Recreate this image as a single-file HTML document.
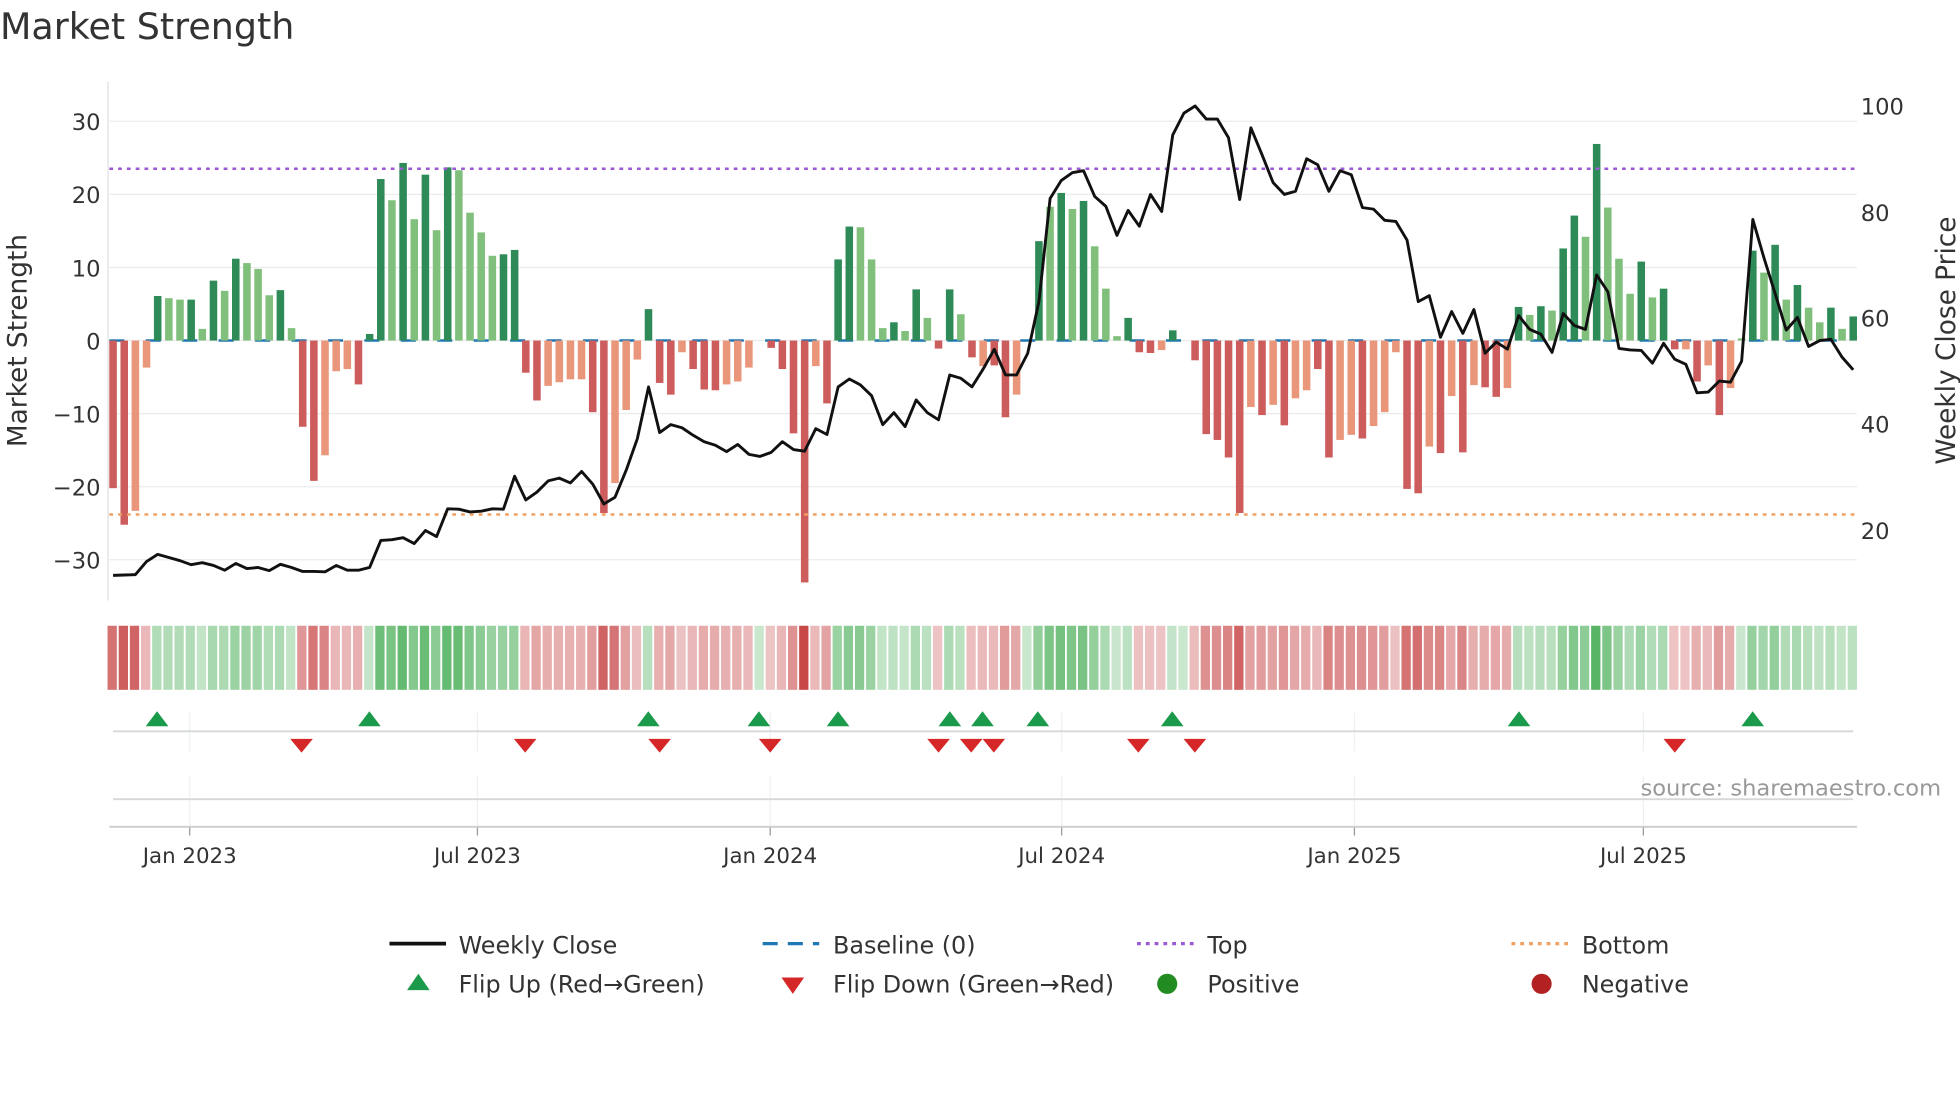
<!DOCTYPE html>
<html><head><meta charset="utf-8">
<style>
html,body{margin:0;padding:0;background:#fff;}
svg{display:block;}
text{font-family:"DejaVu Sans","Liberation Sans",sans-serif;}
</style></head>
<body>
<svg id="s" width="1960" height="1102" viewBox="0 0 1560 877" xmlns="http://www.w3.org/2000/svg">
<rect width="1560" height="877" fill="#fff"/>
<text x="0" y="31" font-size="29" fill="#333">Market Strength</text>
<g id="grid"></g>
<g id="bars"></g>
<g id="lines"></g>
<g id="strip"></g>
<g id="flips"></g>
<g id="axes"></g>
<text transform="translate(21,271) rotate(-90)" font-size="21" fill="#333" text-anchor="middle">Market Strength</text>
<text transform="translate(1556,271) rotate(-90)" font-size="21" fill="#333" text-anchor="middle">Weekly Close Price</text>
<text x="1545" y="633" font-size="18" fill="#999" text-anchor="end">source: sharemaestro.com</text>
<g font-size="19" fill="#333">
<line x1="310" y1="751" x2="355" y2="751" stroke="#111" stroke-width="3"/>
<text x="365" y="759">Weekly Close</text>
<line x1="607" y1="751" x2="652" y2="751" stroke="#1f77b4" stroke-width="2.5" stroke-dasharray="12,8"/>
<text x="663" y="759">Baseline (0)</text>
<line x1="905" y1="751" x2="950" y2="751" stroke="#9b59d6" stroke-width="2.5" stroke-dasharray="3,4"/>
<text x="961" y="759">Top</text>
<line x1="1203" y1="751" x2="1248" y2="751" stroke="#f0a060" stroke-width="2.5" stroke-dasharray="3,4"/>
<text x="1259" y="759">Bottom</text>
<polygon points="324,788 342,788 333,775" fill="#1a9a4a"/>
<text x="365" y="790">Flip Up (Red→Green)</text>
<polygon points="622,778 640,778 631,791" fill="#d62728"/>
<text x="663" y="790">Flip Down (Green→Red)</text>
<circle cx="929" cy="783" r="8" fill="#228b22"/>
<text x="961" y="790">Positive</text>
<circle cx="1227" cy="783" r="8" fill="#b22222"/>
<text x="1259" y="790">Negative</text>
</g>
</svg>
<script>
var NS="http://www.w3.org/2000/svg";
function el(p,t,a){var e=document.createElementNS(NS,t);for(var k in a)e.setAttribute(k,a[k]);document.getElementById(p).appendChild(e);return e;}
var B=[[-20.2,'R'],[-25.2,'R'],[-23.3,'r'],[-3.7,'r'],[6.1,'G'],[5.8,'g'],[5.6,'g'],[5.6,'G'],[1.6,'g'],[8.2,'G'],
[6.8,'g'],[11.2,'G'],[10.6,'g'],[9.8,'g'],[6.2,'g'],[6.9,'G'],[1.7,'g'],[-11.8,'R'],[-19.2,'R'],[-15.7,'r'],
[-4.2,'r'],[-3.9,'r'],[-6.0,'R'],[0.9,'G'],[22.1,'G'],[19.2,'g'],[24.3,'G'],[16.6,'g'],[22.7,'G'],[15.1,'g'],
[23.7,'G'],[23.3,'g'],[17.5,'g'],[14.8,'g'],[11.6,'g'],[11.8,'G'],[12.4,'G'],[-4.4,'R'],[-8.2,'R'],[-6.2,'r'],
[-5.7,'r'],[-5.3,'r'],[-5.3,'r'],[-9.8,'R'],[-23.6,'R'],[-19.5,'r'],[-9.5,'r'],[-2.6,'r'],[4.3,'G'],[-5.8,'R'],
[-7.4,'R'],[-1.6,'r'],[-3.9,'R'],[-6.7,'R'],[-6.8,'R'],[-6.0,'r'],[-5.6,'r'],[-3.7,'r'],[0,'r'],[-1.0,'R'],
[-3.9,'R'],[-12.7,'R'],[-33.1,'R'],[-3.5,'r'],[-8.6,'R'],[11.1,'G'],[15.6,'G'],[15.5,'g'],[11.1,'g'],[1.7,'g'],
[2.5,'G'],[1.3,'g'],[7.0,'G'],[3.1,'g'],[-1.1,'R'],[7.0,'G'],[3.6,'g'],[-2.3,'R'],[-3.5,'r'],
[-3.4,'R'],[-10.5,'R'],[-7.4,'r'],[0,'g'],[13.6,'G'],[18.3,'g'],[20.2,'G'],[18.0,'g'],[19.1,'G'],[12.9,'g'],
[7.1,'g'],[0.6,'g'],[3.1,'G'],[-1.6,'R'],[-1.7,'R'],[-1.3,'r'],[1.4,'G'],[0,'g'],[-2.7,'R'],[-12.8,'R'],
[-13.6,'R'],[-16,'R'],[-23.6,'R'],[-9.1,'r'],[-10.2,'R'],[-8.8,'r'],[-11.6,'R'],[-7.9,'r'],[-6.8,'r'],[-3.9,'R'],
[-16,'R'],[-13.6,'r'],[-12.9,'r'],[-13.4,'R'],[-11.7,'r'],[-9.8,'r'],[-1.6,'r'],[-20.3,'R'],[-20.9,'R'],[-14.5,'r'],
[-15.4,'R'],[-7.6,'r'],[-15.3,'R'],[-6.1,'r'],[-6.4,'R'],[-7.7,'R'],[-6.5,'r'],[4.6,'G'],[3.5,'g'],[4.7,'G'],
[4.1,'g'],[12.6,'G'],[17.1,'G'],[14.2,'g'],[26.9,'G'],[18.2,'g'],[11.2,'g'],[6.4,'g'],[10.8,'G'],[5.9,'g'],
[7.1,'G'],[-1.2,'R'],[-1.2,'r'],[-5.6,'R'],[-3.4,'r'],[-10.2,'R'],[-6.5,'r'],[0.3,'g'],[12.3,'G'],[9.3,'g'],
[13.1,'G'],[5.6,'g'],[7.6,'G'],[4.5,'g'],[2.5,'g'],[4.5,'G'],[1.6,'g'],[3.3,'G']];
var P=[1450,1449,1448,1415,1397,1405,1413,1423,1418,1425,1437,1420,1433,1430,1438,1422,1430,1440,1440,1441,1425,1437,1437,1430,1362,1360,1355,1370,1337,1352,1282,1283,1290,1288,1282,1283,1200,1260,1240,1212,1205,1217,1188,1220,1270,1253,1185,1105,975,1090,1070,1078,1097,1113,1122,1138,1120,1145,1150,1140,1113,1133,1137,1080,1095,975,955,970,997,1070,1040,1075,1008,1040,1058,945,953,975,930,
880,945,945,890,760,500,455,435,430,495,520,593,530,570,490,533,340,285,267,300,300,347,503,322,390,460,490,482,400,415,482,430,440,523,527,555,558,605,760,745,850,785,840,780,890,862,880,795,830,842,888,790,820,830,693,735,878,882,883,915,865,905,918,990,988,960,963,910,553,650,740,832,800,873,858,855,900,932];
var N=B.length, x0=90, dx=(1475-90)/(N-1);
function X(i){return x0+i*dx;}
function Y(v){return 271-v*5.817;}
[30,20,10,0,-10,-20,-30].forEach(function(v){el('grid','line',{x1:87,x2:1478,y1:Y(v),y2:Y(v),stroke:'#ebebeb','stroke-width':1});
 el('axes','text',{x:80,y:Y(v)+7,'font-size':18,fill:'#333','text-anchor':'end'}).textContent=(v<0?'\u2212'+(-v):''+v);});
[[100,84],[80,169],[60,253],[40,337],[20,422]].forEach(function(a){el('axes','text',{x:1481,y:a[1]+7,'font-size':18,fill:'#333'}).textContent=a[0];});
el('grid','line',{x1:86,x2:86,y1:65,y2:478,stroke:'#e0e0e0','stroke-width':1});
el('grid','line',{x1:87,x2:1478,y1:271,y2:271,stroke:'#1f77b4','stroke-width':2,'stroke-dasharray':'12,17'});
var col={G:'#2e8b57',g:'#80bf7c',R:'#cd5c5c',r:'#e9967a'};
for(var i=0;i<N;i++){var v=B[i][0];if(v==0)continue;var y=Y(v);
 el('bars','rect',{x:X(i)-3,y:Math.min(y,271),width:6,height:Math.abs(y-271),fill:col[B[i][1]]});}
el('lines','line',{x1:87,x2:1478,y1:Y(23.5),y2:Y(23.5),stroke:'#9b59d6','stroke-width':2,'stroke-dasharray':'3,4'});
el('lines','line',{x1:87,x2:1478,y1:Y(-23.8),y2:Y(-23.8),stroke:'#f0a060','stroke-width':2,'stroke-dasharray':'3,4'});
var d='';for(var i=0;i<P.length;i++){d+=(i?'L':'M')+X(i).toFixed(1)+' '+(P[i]*0.3158).toFixed(1);}
el('lines','path',{d:d,fill:'none',stroke:'#111','stroke-width':2.3,'stroke-linejoin':'round'});
for(var i=0;i<N;i++){var v=B[i][0];var a=0.3+0.7*Math.min(Math.abs(v)/30,1);
 el('strip','rect',{x:X(i)-4.4,y:498,width:7.4,height:51,fill:v>=0?'#4caf5a':'#c84848','fill-opacity':a});}
var T=[[151,'Jan 2023'],[380,'Jul 2023'],[613,'Jan 2024'],[845,'Jul 2024'],[1078,'Jan 2025'],[1308,'Jul 2025']];
T.forEach(function(t){el('flips','line',{x1:t[0],x2:t[0],y1:567,y2:598,stroke:'#eef0f2'});
 el('flips','line',{x1:t[0],x2:t[0],y1:617,y2:658,stroke:'#eef0f2'});
 el('axes','line',{x1:t[0],x2:t[0],y1:658,y2:665,stroke:'#999'});
 el('axes','text',{x:t[0],y:687,'font-size':17,fill:'#333','text-anchor':'middle'}).textContent=t[1];});
el('flips','line',{x1:90,x2:1475,y1:582,y2:582,stroke:'#d5d8da','stroke-width':1.5});
el('flips','line',{x1:90,x2:1475,y1:636,y2:636,stroke:'#d5d8da','stroke-width':1.5});
el('axes','line',{x1:87,x2:1478,y1:658,y2:658,stroke:'#ccc','stroke-width':1.5});
[125,294,516,604,667,756,782,826,933,1209,1395].forEach(function(x){el('flips','polygon',{points:(x-9)+',578 '+(x+9)+',578 '+x+',566',fill:'#1a9a4a'});});
[240,418,525,613,747,773,791,906,951,1333].forEach(function(x){el('flips','polygon',{points:(x-9)+',588 '+(x+9)+',588 '+x+',599',fill:'#d62728'});});
</script>
</body></html>
